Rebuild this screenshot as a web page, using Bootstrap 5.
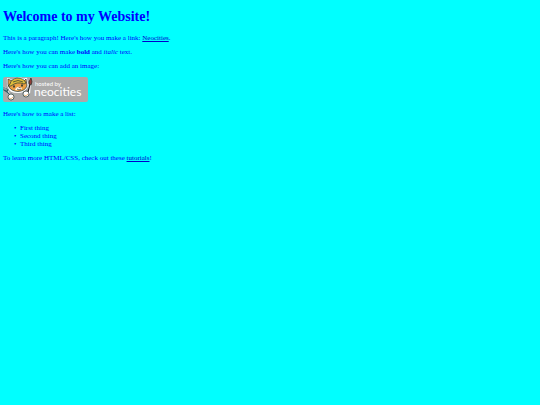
<!DOCTYPE html>
<html lang="en">
<head>
<meta charset="utf-8">
<meta name="viewport" content="width=device-width, initial-scale=1">
<title>My Website</title>
<link href="https://cdn.jsdelivr.net/npm/bootstrap@5.3.0/dist/css/bootstrap.min.css" rel="stylesheet">
<style>
  body { background: #0ff; color: #00f; font: 7px/8px "Liberation Serif", "Times New Roman", serif; }
  .page-content { padding: 9px 3px; }
  h1 { font-size: 14px; line-height: 16px; margin-bottom: 9px; }
  p { margin-bottom: 6px; }
  ul { padding-left: 17px; margin-bottom: 6px; list-style-type: "•\a0\a0"; }
  li { line-height: 8px; }
  a, a:hover { color: #00c; }
  .picture-row { padding: 1px 0 2px; }
  .host-badge { width: 85px; height: 25px; font-family: "Lato", sans-serif; }
</style>
<script src="https://cdn.jsdelivr.net/npm/bootstrap@5.3.0/dist/js/bootstrap.bundle.min.js"></script>
</head>
<body>
<main class="page-content">
  <h1 class="fw-bold">Welcome to my Website!</h1>
  <p>This is a paragraph! Here's how you make a link: <a href="#neocities">Neocities</a>.</p>
  <p>Here's how you can make <strong class="fw-bold">bold</strong> and <em>italic</em> text.</p>
  <p>Here's how you can add an image:</p>
  <p class="picture-row">
    <svg class="host-badge d-block" viewBox="0 0 85 25" role="img" aria-label="Hosted by Neocities">
      <rect x="0" y="0" width="85" height="25" rx="2" fill="#aaa"/>
      <g stroke="#fff" stroke-width="2.2" stroke-linejoin="round" stroke-linecap="round" fill="#fff">
        <path d="M5 6 5 2 9 4Q15 0 21 3L23 2 24 9Q21 15 15 15Q7 15 6 10Z"/>
        <path d="M1 11 4 14 8 20M27 3 26 16"/>
      </g>
      <g stroke="#243634" stroke-width=".7" stroke-linejoin="round">
        <path fill="#eba044" d="M5 7 5 2 9 4Q15 2 21 4L23 2 24 9Q22 14 15 14.5 8 14 6 10Z"/>
        <path fill="#dfbd3b" d="M7 7Q8 2 14 1 21 1 23 6L21 7Q14 4 8 9L5 9Z"/>
        <path fill="#fff0dc" stroke="none" d="M13 11Q15 9 18 10L19 12Q15 14 12 13Z"/>
        <path fill="none" d="M10 5Q15 2 20 5M14 12l2 1 2-1"/>
        <ellipse cx="11" cy="9.500" rx=".5" ry="1" fill="#222"/>
        <ellipse cx="19" cy="8.500" rx=".5" ry="1" fill="#222"/>
        <path fill="#704432" stroke="none" d="M15 10h3l-1 1z"/>
        <path fill="none" stroke="#345e68" stroke-width="1.2" d="M1 10v3l3 2 1-3M3 11v3l4 4"/>
        <path fill="none" stroke="#222" stroke-width="1.2" d="M27 7 25 15"/>
        <path fill="#923c35" d="M26 7Q25 4 28 1 30 5 28 8Z"/>
        <circle cx="8" cy="20" r="3" fill="#fff"/>
        <circle cx="23" cy="17" r="3" fill="#fff"/>
        <path fill="none" stroke="#e19645" d="M6 21Q8 23 10 20M21 18Q23 20 25 17"/>
      </g>
      <text x="32" y="9" font-size="6" fill="#fff">hosted by</text>
      <text x="31" y="19" font-size="12" fill="#fff">neocities</text>
    </svg>
  </p>
  <p>Here's how to make a list:</p>
  <ul>
    <li>First thing</li>
    <li>Second thing</li>
    <li>Third thing</li>
  </ul>
  <p class="mb-0">To learn more HTML/CSS, check out these <a href="#tutorials">tutorials</a>!</p>
</main>
</body>
</html>
